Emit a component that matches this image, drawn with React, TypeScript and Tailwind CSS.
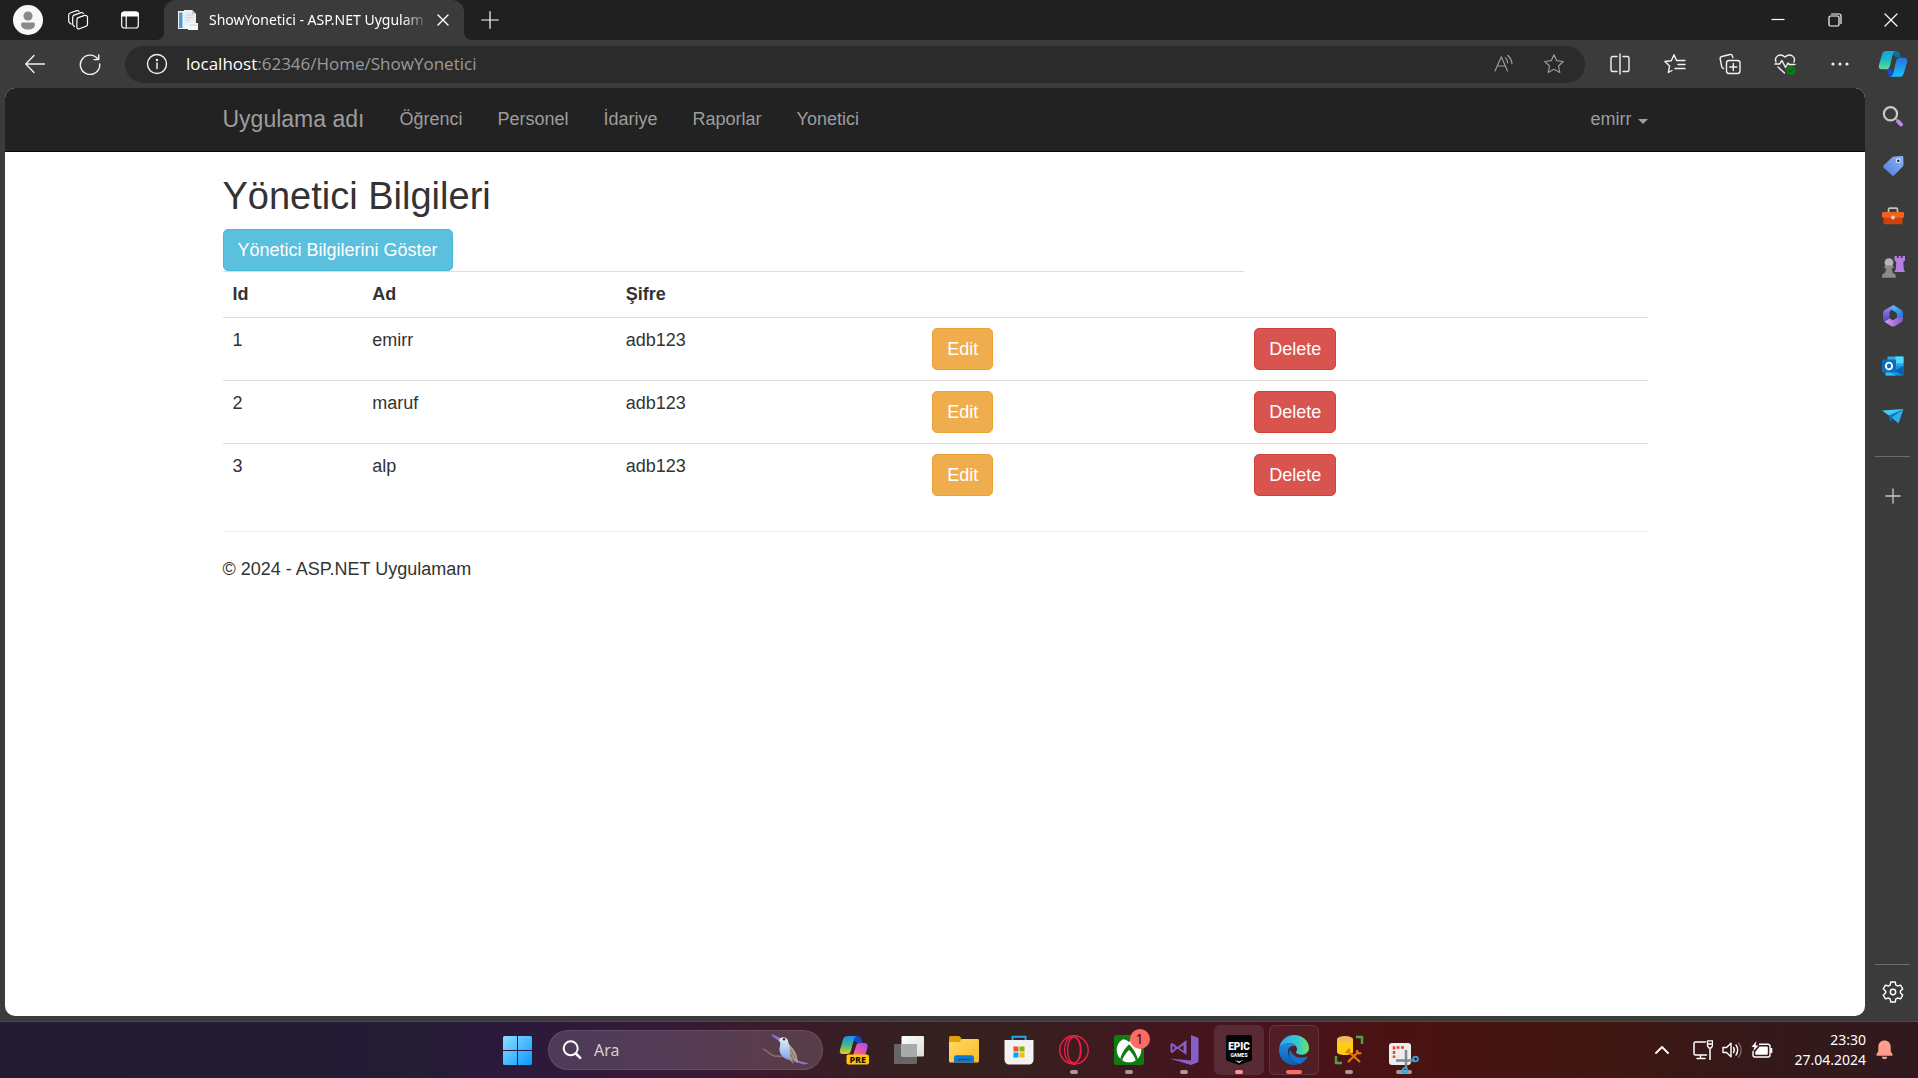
import React from "react";

type Box = { children: React.ReactNode; size?: number; vb?: string; className?: string };

function Svg({ children, size = 20, vb = "0 0 20 20", className }: Box) {
  return (
    <svg
      width={size}
      height={size}
      viewBox={vb}
      fill="none"
      stroke="currentColor"
      strokeWidth={1.2}
      strokeLinecap="round"
      strokeLinejoin="round"
      className={className}
      aria-hidden="true"
    >
      {children}
    </svg>
  );
}

/* ---------- title bar ---------- */

function IconButton({ label, className, children }: { label: string; className: string; children: React.ReactNode }) {
  return (
    <button type="button" aria-label={label} className={`flex shrink-0 items-center justify-center ${className}`}>
      {children}
    </button>
  );
}

function TitleBar() {
  return (
    <div className="flex h-10 shrink-0 items-stretch bg-[#202020] pl-[2px] text-white">
      <IconButton label="Profil" className="w-[52px]">
        <svg width="30" height="30" viewBox="0 0 30 30" aria-hidden="true">
          <circle cx="15" cy="15" r="15" fill="#f8f8f8" />
          <circle cx="15" cy="11" r="4.6" fill="#8a8a8a" />
          <path d="M8 19.2c0-1 .7-1.700 1.700-1.700h10.600c1 0 1.700.7 1.700 1.700 0 3.300-3 5.300-7 5.300s-7-2-7-5.300Z" fill="#8a8a8a" />
        </svg>
      </IconButton>
      <IconButton label="Çalışma alanları" className="w-[47px]">
        <Svg size={22} vb="0 0 22 22">
          <path d="m11.200 8.600 6.600-2.200c1.400-.4 2.700.4 2.700 1.900v7c0 1-.5 1.700-1.400 2l-6.600 2.500c-1.400.5-2.600-.3-2.600-1.800v-7.200c0-1.100.4-1.800 1.300-2.200Z" />
          <path d="m7.600 17.400-1-.6c-.6-.5-.9-1-.9-1.700V8.200c0-1 .5-1.700 1.400-2.100l7-2.500c1-.3 1.800.1 2.200.9" />
          <path d="m4 15-1.400-1.300c-.6-.5-.9-1-.9-1.700V6c0-1 .5-1.700 1.400-2l6.700-2.400c1-.3 1.800.1 2.200.9" />
        </Svg>
      </IconButton>
      <IconButton label="Sekme eylemleri" className="w-[57px]">
        <Svg>
          <rect x="1.700" y="2" width="16.600" height="16" rx="2.500" />
          <path d="M1.700 6V4.500A2.500 2.500 0 0 1 4.200 2h11.600a2.500 2.500 0 0 1 2.500 2.500V6Z" fill="currentColor" />
          <path d="M6.200 6v12" />
        </Svg>
      </IconButton>
      <div className="relative ml-[6px] flex w-[300px] shrink-0 items-center rounded-t-xl bg-[#3b3b3b] pl-[14px] before:absolute before:bottom-0 before:-left-2 before:h-2 before:w-2 before:bg-[radial-gradient(circle_at_0_0,transparent_8px,#3b3b3b_8px)] after:absolute after:-right-2 after:bottom-0 after:h-2 after:w-2 after:bg-[radial-gradient(circle_at_100%_0,transparent_8px,#3b3b3b_8px)]">
        <svg width="20" height="20" viewBox="0 0 20 20" className="shrink-0" aria-hidden="true">
          <path d="M0 1h12v18H0Z" fill="#f2f5f7" />
          <path d="M1 2.500h3.500v15.500H1Z" fill="#4f9dd0" />
          <path d="M6 0h8l4 4v11H6Z" fill="#e9eef2" />
          <path d="M14 0v4h4Z" fill="#c3ccd4" />
          <path d="M7.500 5h8M7.500 7.500h8M7.500 10h5" stroke="#c9d4dc" />
          <path d="M10 13h10v7H10Z" fill="#f7fafc" />
          <path d="M11 15h8" stroke="#c0cad2" />
        </svg>
        <span className="ml-[11px] w-[220px] whitespace-nowrap font-['Noto_Sans','Open_Sans',sans-serif] text-sm [mask-image:linear-gradient(to_right,black_88%,transparent)]">
          ShowYonetici - ASP.NET Uygulam
        </span>
        <button type="button" aria-label="Sekmeyi kapat" className="ml-2">
          <Svg size={12} vb="0 0 12 12">
            <path d="m1 1 10 10M11 1 1 11" strokeWidth="1.400" />
          </Svg>
        </button>
      </div>
      <IconButton label="Yeni sekme" className="w-[52px]">
        <Svg size={18} vb="0 0 18 18">
          <path d="M9 .7v16.600M.7 9h16.600" />
        </Svg>
      </IconButton>
      <div className="flex-1" />
      <IconButton label="Simge durumuna küçült" className="w-[57px]">
        <Svg size={14} vb="0 0 14 14">
          <path d="M.5 6.500h13" strokeLinecap="butt" />
        </Svg>
      </IconButton>
      <IconButton label="Önceki boyut" className="w-[57px]">
        <Svg size={14} vb="0 0 14 14">
          <rect x="1" y="3" width="10" height="10" rx="1.500" />
          <path d="M3.500 1H11a2 2 0 0 1 2 2v7.500" />
        </Svg>
      </IconButton>
      <IconButton label="Kapat" className="w-[55px]">
        <Svg size={14} vb="0 0 14 14">
          <path d="m1 1 12 12m0-12L1 13" />
        </Svg>
      </IconButton>
    </div>
  );
}

/* ---------- address bar ---------- */

function CopilotMark({ size }: { size: number }) {
  return (
    <svg width={size} height={size} viewBox="0 0 32 32" aria-hidden="true">
      <defs>
        <linearGradient id="cpA" x1="0" y1="0" x2="0" y2="1">
          <stop offset="0" stopColor="#0fa5e0" />
          <stop offset=".5" stopColor="#22b7c4" />
          <stop offset="1" stopColor="#5fe08a" />
        </linearGradient>
        <linearGradient id="cpB" x1="0" y1="1" x2="0" y2="0">
          <stop offset="0" stopColor="#12c4f5" />
          <stop offset="1" stopColor="#2a6fe0" />
        </linearGradient>
      </defs>
      <path d="M16 2h4c1.600 0 2.500 1 3 2.500L24.500 9H19l-6-6Z" fill="#0b6f9e" />
      <path d="M8 21h6l2 4 2 4.500h-4c-1.800 0-2.800-1.500-3.300-3.100L9.500 22Z" fill="#1c47d8" />
      <path d="M8.500 2H19c-1.700.3-2.600 1.400-3.200 3.400L12.700 18c-.6 2.400-2 3.700-4.200 3.700H4c-2.700 0-3.700-2-3-4.700L4.200 6C5 3.300 6.300 2 8.500 2Z" fill="url(#cpA)" />
      <path d="M23.500 29.500H13c1.700-.3 2.600-1.400 3.200-3.400L19.300 13c.6-2.400 2-3.700 4.200-3.700H28c2.700 0 3.700 2 3 4.700l-3.200 11c-.8 2.900-2.100 4.500-4.300 4.500Z" fill="url(#cpB)" />
    </svg>
  );
}

function AddressBar() {
  const tool = "h-full w-[55px]";
  return (
    <div className="flex h-12 shrink-0 items-center bg-[#3b3b3b] pl-[7px] text-[#f1f1f1]">
      <IconButton label="Geri" className={tool}>
        <Svg size={20}>
          <path d="M9 1.500.8 10 9 18.500M.8 10h18.700" strokeWidth="1.400" />
        </Svg>
      </IconButton>
      <IconButton label="Yenile" className={tool}>
        <Svg size={22}>
          <path d="M17.300 5.800A8.800 8.800 0 1 0 18.800 10M17.900 1.700V6h-4.300" strokeWidth="1.300" />
        </Svg>
      </IconButton>
      <div className="ml-2 flex h-[37px] flex-1 items-center rounded-full bg-[#2b2b2b] pl-[21px] pr-[6px]">
        <button type="button" aria-label="Site bilgileri">
          <Svg size={22} vb="0 0 22 22">
            <circle cx="11" cy="11" r="9.500" strokeWidth="1.400" />
            <path d="M11 10v5.500" strokeWidth="1.500" />
            <circle cx="11" cy="7" r=".6" fill="currentColor" />
          </Svg>
        </button>
        <div className="relative ml-[18px] h-full flex-1 font-['Open_Sans','Noto_Sans',sans-serif] text-[17px]">
          <input
            aria-label="Adres çubuğu"
            defaultValue="localhost:62346/Home/ShowYonetici"
            className="h-full w-full bg-transparent text-transparent outline-none"
          />
          <span aria-hidden="true" className="pointer-events-none absolute inset-0 flex items-center text-[#9a9a9a]">
            <span className="text-white">localhost</span>:62346/Home/ShowYonetici
          </span>
        </div>
        <IconButton label="Sesli oku" className="h-full w-[50px] text-[#9a9a9a]">
          <Svg size={20}>
            <path d="M1 17 7.300 2.800 13.500 17M3.300 12h8" />
            <path d="M11.300 3.600c1.500 1.400 2.300 3.200 2.400 5.200M13.600 1.300c2.600 2.200 4 5 4.400 8.400" />
          </Svg>
        </IconButton>
        <IconButton label="Sık kullanılanlara ekle" className="h-full w-[50px] text-[#9a9a9a]">
          <Svg size={22} vb="0 0 22 22">
            <path d="m11 1.800 2.800 5.900 6.500.8-4.800 4.500 1.300 6.500L11 16.300l-5.800 3.200L6.500 13 1.700 8.500l6.500-.8Z" />
          </Svg>
        </IconButton>
      </div>
      <div className="ml-[7px] flex h-full shrink-0">
        <IconButton label="Ekranı böl" className={tool}>
          <Svg size={22} vb="0 0 22 22">
            <path d="M8 3.500H4A2 2 0 0 0 2 5.500v11a2 2 0 0 0 2 2h4M14 3.500h4a2 2 0 0 1 2 2v11a2 2 0 0 1-2 2h-4M11 1v20" strokeWidth="1.400" />
          </Svg>
        </IconButton>
        <IconButton label="Sık kullanılanlar" className={tool}>
          <Svg size={22} vb="0 0 22 22">
            <path d="M12.500 7.500 10 1.800 7.300 7.700.9 8.500l4.700 4.600-1.300 6.400 3.700-2M13 7.500h8M14 11.500h7M11 15.500h10" strokeWidth="1.400" />
          </Svg>
        </IconButton>
        <IconButton label="Koleksiyonlar" className={tool}>
          <Svg size={22} vb="0 0 22 22">
            <rect x="7.500" y="7.500" width="13.500" height="13" rx="2.500" strokeWidth="1.400" />
            <path d="M14.300 10.500v7M10.800 14h7" strokeWidth="1.400" />
            <path d="M4.500 15.500c-1-.2-1.600-.8-1.800-1.800L1.200 6C1 4.800 1.600 3.800 2.900 3.500l8-2c1.200-.3 2.200.3 2.500 1.500l.4 1.500" strokeWidth="1.400" />
          </Svg>
        </IconButton>
        <IconButton label="Tarayıcı temelleri" className={tool}>
          <Svg size={22} vb="0 0 22 22">
            <path d="M2 9C-.2 3.500 6-.5 11 4c5-4.500 11.200-.5 9 5M4 14l6.500 6" strokeWidth="1.400" />
            <path d="M1 11h4.500L8 7.500l3.500 7L14 10l1.200 1.500H21" strokeWidth="1.400" />
            <circle cx="17" cy="17.500" r="4.500" fill="#107c10" stroke="none" />
            <path d="m15 17.500 1.400 1.400 2.400-2.600" stroke="#0b4f0b" />
          </Svg>
        </IconButton>
        <IconButton label="Ayarlar ve diğer" className={tool}>
          <svg width="18" height="4" viewBox="0 0 18 4" fill="currentColor" aria-hidden="true">
            <circle cx="2" cy="2" r="1.600" />
            <circle cx="9" cy="2" r="1.600" />
            <circle cx="16" cy="2" r="1.600" />
          </svg>
        </IconButton>
        <IconButton label="Copilot" className="h-full w-[51px]">
          <CopilotMark size={30} />
        </IconButton>
      </div>
    </div>
  );
}

/* ---------- web page ---------- */

const admins = [
  { id: 1, name: "emirr", password: "adb123" },
  { id: 2, name: "maruf", password: "adb123" },
  { id: 3, name: "alp", password: "adb123" },
];

const navLinks = ["Öğrenci", "Personel", "İdariye", "Raporlar", "Yonetici"];

function WebPage() {
  const container = "mx-auto max-w-[1463px] px-[19px]";
  const cell = "border-t border-[#ddd] p-[10px] text-left align-top";
  return (
    <div className="min-w-0 flex-1 overflow-hidden rounded-[10px] bg-white font-['Liberation_Sans',Arial,sans-serif] text-[18px] leading-[25px] text-[#333]">
      <nav className="border-b border-[#080808] bg-[#222] text-[#9d9d9d]">
        <div className={`${container} flex h-[63px] items-center`}>
          <a href="#" className="mr-[35px] text-[23px]">Uygulama adı</a>
          <ul className="flex gap-[35px]">
            {navLinks.map((l) => (
              <li key={l}>
                <a href="#">{l}</a>
              </li>
            ))}
          </ul>
          <button type="button" className="ml-auto flex items-center gap-[6px]">
            emirr
            <span className="mt-1 border-x-[5px] border-t-[5px] border-x-transparent border-t-[#9d9d9d]" />
          </button>
        </div>
      </nav>
      <main className={container}>
        <h2 className="mt-6 mb-3 text-[38px] leading-[41px]">Yönetici Bilgileri</h2>
        <button type="button" className="flex h-[42px] items-center rounded-[5px] border border-[#46b8da] bg-[#5bc0de] px-[14px] text-white">
          Yönetici Bilgilerini Göster
        </button>
        <table className="mb-[25px] w-full table-fixed border-separate border-spacing-0">
          <colgroup>
            <col className="w-[9.8%]" />
            <col className="w-[17.8%]" />
            <col className="w-[21.5%]" />
            <col className="w-[22.6%]" />
            <col />
          </colgroup>
          <thead>
            <tr>
              <th className={cell}>Id</th>
              <th className={cell}>Ad</th>
              <th className={cell}>Şifre</th>
              <th className={cell} />
            </tr>
          </thead>
          <tbody>
            {admins.map((a) => (
              <tr key={a.id}>
                <td className={cell}>{a.id}</td>
                <td className={cell}>{a.name}</td>
                <td className={cell}>{a.password}</td>
                <td className={cell}>
                  <button type="button" className="flex h-[42px] items-center rounded-[5px] border border-[#eea236] bg-[#f0ad4e] px-[14px] text-white">
                    Edit
                  </button>
                </td>
                <td className={cell}>
                  <button type="button" className="flex h-[42px] items-center rounded-[5px] border border-[#d43f3a] bg-[#d9534f] px-[14px] text-white">
                    Delete
                  </button>
                </td>
              </tr>
            ))}
          </tbody>
        </table>
        <hr className="mb-[25px] border-[#eee]" />
        <footer>
          <p>© 2024 - ASP.NET Uygulamam</p>
        </footer>
      </main>
    </div>
  );
}

/* ---------- Edge sidebar ---------- */

function SideBar() {
  const item = "h-[50px] w-full";
  return (
    <aside className="flex w-[53px] shrink-0 flex-col items-center pt-[3px] pl-[2px] text-[#c8c8c8]">
      <IconButton label="Ara" className={item}>
        <svg width="22" height="22" viewBox="0 0 22 22" fill="none" aria-hidden="true">
          <path d="m13.500 13.500 2.500 2.500" stroke="#8a8a8a" strokeWidth="2" />
          <path d="m16.300 16.700 2.700 2.700" stroke="#b98ae8" strokeWidth="4" strokeLinecap="round" />
          <circle cx="8.500" cy="8.800" r="6.600" stroke="#c9c9c9" strokeWidth="2.200" />
        </svg>
      </IconButton>
      <IconButton label="Alışveriş" className={item}>
        <svg width="22" height="22" viewBox="0 0 22 22" aria-hidden="true">
          <defs>
            <linearGradient id="tag" x1="1" y1="0" x2="0" y2="1">
              <stop offset="0" stopColor="#8db4f7" />
              <stop offset="1" stopColor="#4c7fdc" />
            </linearGradient>
          </defs>
          <path d="M12 1.500 20 1c.8 0 1.300.6 1.300 1.300l.2 7.500c0 .7-.2 1.200-.7 1.700l-8.600 8.700c-.7.700-1.500.7-2.200 0l-8.300-7.400c-.7-.7-.8-1.600-.1-2.300l8.800-8.400c.5-.4 1-.6 1.600-.6Z" fill="url(#tag)" />
          <circle cx="16.300" cy="5.800" r="1.900" fill="#1f2b45" stroke="#e8eefc" strokeWidth="1.100" />
        </svg>
      </IconButton>
      <IconButton label="Araçlar" className={item}>
        <svg width="22" height="22" viewBox="0 0 22 22" aria-hidden="true">
          <path d="M6.500 8V4.500c0-.9.600-1.400 1.400-1.400h6.200c.8 0 1.400.5 1.400 1.400V8" fill="none" stroke="#c4c4c4" strokeWidth="1.700" />
          <path d="M1.500 11h19v7c0 .8-.5 1.300-1.300 1.300H2.800c-.8 0-1.300-.5-1.300-1.300Z" fill="#d2400b" />
          <path d="M1.300 7h19.400c.7 0 1.300.5 1.300 1.200v3.300c0 .8-.5 1.200-1.200 1.200H1.200C.5 12.700 0 12.300 0 11.500V8.200C0 7.500.6 7 1.300 7Z" fill="#f2601e" />
          <circle cx="11" cy="12.500" r="2" fill="#d9d2cc" />
        </svg>
      </IconButton>
      <IconButton label="Oyunlar" className={item}>
        <svg width="24" height="24" viewBox="0 0 24 24" aria-hidden="true">
          <path d="M13.500 2h2.400v2h1.700V2h2.200v2h1.600V2H24v4.500l-1.700 1.600.5 7.400 1.200 2.500H13.300l1.400-2.500.6-7.400-1.800-1.600Z" fill="#b77ee0" />
          <circle cx="8" cy="8.600" r="4.400" fill="#b5b5b5" />
          <path d="M3.500 11.500h9v3h-2l1.300 4.500c2 .4 2.900 1.500 2.900 3.200v1.500H1v-1.500C1 20.500 2 19.400 4 19l1.500-4.500h-2Z" fill="#8b8b8b" />
        </svg>
      </IconButton>
      <IconButton label="Microsoft 365" className={item}>
        <svg width="22" height="22" viewBox="0 0 22 22" aria-hidden="true">
          <defs>
            <linearGradient id="mA" x1="0" y1="0" x2="0" y2="1">
              <stop offset="0" stopColor="#a18bf0" />
              <stop offset="1" stopColor="#4b3fc0" />
            </linearGradient>
            <linearGradient id="mB" x1="0" y1="0" x2="1" y2="1">
              <stop offset="0" stopColor="#4fc3f7" />
              <stop offset="1" stopColor="#2a62d8" />
            </linearGradient>
            <linearGradient id="mC" x1="0" y1="0" x2="1" y2="0">
              <stop offset="0" stopColor="#d59cf0" />
              <stop offset="1" stopColor="#8257c6" />
            </linearGradient>
          </defs>
          <path d="M10.500.5 3 4.700C1.700 5.500 1 6.500 1 8v6c0 1.500.7 2.500 1.800 3.200L7.500 14.500V8c0-1.300.4-2.200 1.500-2.800l2.500-1.500Z" fill="url(#mA)" />
          <path d="m10 .8 2-.5 7.200 4.400C20.500 5.500 21 6.500 21 8v6l-6 0V9.500c0-1-.5-1.700-1.300-2.200L10 5Z" fill="url(#mB)" />
          <path d="m2.500 16.800 5-3.300 3.500 1.700 3.800-2.200L21 12v2.200c0 1.300-.6 2.300-1.800 3L13 20.900c-1.200.8-2.700.8-4 0Z" fill="url(#mC)" />
          <path d="m10.500 7.200 3.800 1.800v3.600L11 14.500l-3-1.700V8.600Z" fill="#3b3b3b" />
        </svg>
      </IconButton>
      <IconButton label="Outlook" className={item}>
        <svg width="22" height="22" viewBox="0 0 22 22" aria-hidden="true">
          <path d="M5.500 1.500h15c.5 0 1 .4 1 1V12h-16Z" fill="#28a8ea" />
          <path d="M13.500 1.500h7c.5 0 1 .4 1 1v5.700h-8Z" fill="#50d9ff" />
          <path d="M3.500 11h18v8.500c0 .6-.5 1-1 1h-16c-.5 0-1-.4-1-1Z" fill="#1490df" />
          <path d="m21.500 11-9 5 9 4.500Z" fill="#0a5fb0" />
          <path d="M3.500 14.500 14 20.500H4.500c-.5 0-1-.4-1-1Z" fill="#2cc0f5" />
          <rect x="0" y="4.500" width="14" height="13" rx="1.200" fill="#0f6cbd" />
          <ellipse cx="7" cy="11" rx="3.100" ry="3.400" fill="none" stroke="#fff" strokeWidth="1.900" />
        </svg>
      </IconButton>
      <IconButton label="Drop" className={item}>
        <svg width="22" height="22" viewBox="0 0 22 22" aria-hidden="true">
          <path d="M0 5.500 21.500 4 9 12Z" fill="#45c9f5" />
          <path d="m7 10.500 14.500-6.500L9.500 12.500l-1.200 4.800Z" fill="#1073ba" />
          <path d="M21.500 4 16.500 18.500 9.500 12.500Z" fill="#27b0ee" />
          <path d="m8.300 17.300 1.200-4.800 2.500 2.200Z" fill="#0c5f9e" />
        </svg>
      </IconButton>
      <hr className="mt-[15px] w-[35px] border-[#6b6b6b]" />
      <IconButton label="Özelleştir" className="mt-[14px] h-[50px] w-full">
        <Svg size={16} vb="0 0 16 16">
          <path d="M8 .8v14.400M.8 8h14.400" strokeWidth="1.300" />
        </Svg>
      </IconButton>
      <hr className="mt-auto w-[35px] border-[#6b6b6b]" />
      <IconButton label="Ayarlar" className="mb-[2px] h-[54px] w-full text-white">
        <Svg size={22} vb="0 0 22 22">
          <path
            d="M8.800 1h4.400l.7 3.100 1.600.9 3-.9 2.200 3.800-2.300 2.200v1.800l2.300 2.200-2.200 3.800-3-.9-1.600.9-.7 3.100H8.800l-.7-3.100-1.600-.9-3 .9-2.200-3.800 2.300-2.200v-1.800L1.300 7.900l2.200-3.800 3 .9 1.600-.9Z"
            strokeWidth="1.400"
          />
          <circle cx="11" cy="11" r="2.700" strokeWidth="1.400" />
        </Svg>
      </IconButton>
    </aside>
  );
}

/* ---------- Windows taskbar ---------- */

function TaskButton({
  label,
  mark,
  active,
  children,
}: {
  label: string;
  mark?: string;
  active?: string;
  children: React.ReactNode;
}) {
  return (
    <button type="button" aria-label={label} className="relative flex h-full w-[55px] shrink-0 items-center justify-center">
      <span className={`flex h-[50px] w-[50px] items-center justify-center rounded-md ${active ?? ""}`}>{children}</span>
      {mark && <span className={`absolute bottom-1 h-1 rounded-full ${mark}`} />}
    </button>
  );
}

function Bird() {
  return (
    <svg width="48" height="32" viewBox="0 0 48 32" aria-hidden="true">
      <defs>
        <linearGradient id="bird" x1="0" y1="0" x2="0" y2="1">
          <stop offset="0" stopColor="#e6f2ee" />
          <stop offset=".6" stopColor="#a9c9ee" />
          <stop offset="1" stopColor="#8f9be8" />
        </linearGradient>
      </defs>
      <path d="M1 15c4 1 6 5 10 6.500S17 21 20 23" fill="none" stroke="#8d6a62" strokeWidth="1.700" />
      <path d="m20 22 9 2.500 18 5-5 1-17-5Z" fill="#8a72cf" />
      <path d="m10 1 9 4-1 2Z" fill="#8d6fd0" stroke="#8d6fd0" strokeWidth="1.500" />
      <path d="M17 6c1-3 6-4 8.500-.5C26.500 7 26 9 27.500 11c4 4 6 7 6.500 13l-5 1.500c-6 0-10.500-3-11.500-9-.4-3 1-5 .8-7.500Z" fill="url(#bird)" />
      <path d="M27.500 12c5 3 8 8 8.500 17l-7-4 3 5c-4-3-5-6-4-9Z" fill="#b19a80" />
      <path d="m28.500 16 5 8m-5-4 4 8" stroke="#6e6a80" />
      <circle cx="22" cy="5.300" r="1.200" fill="#2c2c60" />
    </svg>
  );
}

function TaskBar() {
  const dot = "w-2 bg-[#a89a9b]";
  return (
    <footer className="grid h-[57px] shrink-0 grid-cols-[1fr_auto_1fr] items-center border-t border-[#50454a] bg-[linear-gradient(90deg,#231c30_0%,#251c35_22%,#2b193b_26%,#35193a_34%,#3d1a2d_40%,#34211f_48%,#37201f_53%,#42171f_60%,#48121d_66%,#4a1312_73%,#401611_83%,#35191a_92%,#2f191e_100%)] pl-[3px] font-['Noto_Sans','Open_Sans',sans-serif] text-white">
      <div />
      <div className="flex h-full items-center">
        <TaskButton label="Başlat">
          <svg width="29" height="29" viewBox="0 0 29 29" aria-hidden="true">
            <defs>
              <linearGradient id="win" gradientUnits="userSpaceOnUse" x1="0" y1="0" x2="29" y2="29">
                <stop offset="0" stopColor="#8be2ff" />
                <stop offset="1" stopColor="#0a95ff" />
              </linearGradient>
            </defs>
            <path d="M1.500 0H14v14H0V1.500A1.500 1.500 0 0 1 1.500 0ZM15 0h12.500A1.500 1.500 0 0 1 29 1.500V14H15ZM0 15h14v14H1.500A1.500 1.500 0 0 1 0 27.500ZM15 15h14v12.500a1.500 1.500 0 0 1-1.500 1.500H15Z" fill="url(#win)" />
          </svg>
        </TaskButton>
        <label className="mr-[3px] ml-[3px] flex h-10 w-[275px] items-center rounded-full border border-white/10 bg-white/15 pr-3 pl-[13px]">
          <Svg size={20}>
            <circle cx="8.700" cy="8.300" r="7" strokeWidth="2" />
            <path d="m13.800 13.500 4.400 4.400" strokeWidth="2.500" />
          </Svg>
          <input aria-label="Ara" placeholder="Ara" className="ml-3 min-w-0 flex-1 bg-transparent text-base outline-none placeholder:text-[#d8ccd4]" />
          <Bird />
        </label>
        <TaskButton label="Copilot">
          <svg width="30" height="30" viewBox="0 0 30 30" aria-hidden="true">
            <defs>
              <linearGradient id="cA" x1="0" y1="0" x2="0" y2="1">
                <stop offset="0" stopColor="#1b8df0" />
                <stop offset=".5" stopColor="#3cb98a" />
                <stop offset="1" stopColor="#f5c518" />
              </linearGradient>
              <linearGradient id="cB" x1="1" y1="0" x2="0" y2="1">
                <stop offset="0" stopColor="#9a4ff0" />
                <stop offset=".6" stopColor="#e858a8" />
                <stop offset="1" stopColor="#ff8a5c" />
              </linearGradient>
            </defs>
            <path d="M12 1h6.500c2 0 3 1 3.500 2.500L23.500 8H18l-5-4Z" fill="#1746c8" />
            <path d="M9 1h9c-2 .5-2.600 1.500-3 3.300L12 15.500c-.6 2.400-1.800 3.500-4 3.500H3.700C1 19 .3 17.200 1 14.800L4 4.500C4.800 2 6.500 1 9 1Z" fill="url(#cA)" />
            <path d="M20.500 8H25c3 0 4.300 1.800 3.500 4.500L26 21H14l3-10c.6-2 1.500-3 3.500-3Z" fill="url(#cB)" />
            <rect x="7.500" y="19.500" width="22.500" height="10" rx="2" fill="#ffc60a" />
            <text x="18.700" y="27.700" textAnchor="middle" fontSize="9" fontWeight="800" fill="#1a1400">PRE</text>
          </svg>
        </TaskButton>
        <TaskButton label="Görev görünümü">
          <svg width="30" height="28" viewBox="0 0 30 28" aria-hidden="true">
            <defs>
              <linearGradient id="tv" x1="0" y1="0" x2="1" y2="1">
                <stop offset="0" stopColor="#fff" />
                <stop offset="1" stopColor="#dcdcdc" />
              </linearGradient>
            </defs>
            <rect x="0" y="8" width="23" height="20" rx="1" fill="#666" />
            <rect x="7.500" y="0" width="22.500" height="20.500" rx="1" fill="url(#tv)" />
            <path d="M7.500 8H23v12.500H7.500Z" fill="#aaa" />
          </svg>
        </TaskButton>
        <TaskButton label="Dosya Gezgini">
          <svg width="32" height="28" viewBox="0 0 32 28" aria-hidden="true">
            <defs>
              <linearGradient id="fold" x1="0" y1="0" x2="1" y2="1">
                <stop offset="0" stopColor="#ffdb66" />
                <stop offset="1" stopColor="#fcb82a" />
              </linearGradient>
            </defs>
            <path d="M1 1.500C1 .7 1.600 0 2.500 0h8c.5 0 1 .2 1.300.5L14 3.500 11 9H1Z" fill="#e8a008" />
            <path d="M1 6h10.500L14 3h15.500c.9 0 1.500.7 1.500 1.500V25c0 .9-.6 1.500-1.500 1.500h-27C1.600 26.500 1 25.900 1 25Z" fill="url(#fold)" />
            <path d="M6 26.500V22c0-1.700 1-2.700 2.700-2.700h14.600c1.700 0 2.700 1 2.700 2.700v4.500Z" fill="#0f78d0" />
            <path d="M10 23.500h12" stroke="#0a4f93" strokeWidth="1.300" />
          </svg>
        </TaskButton>
        <TaskButton label="Microsoft Store">
          <svg width="30" height="30" viewBox="0 0 30 30" aria-hidden="true">
            <path d="M8.500 5V1.700h13V5" fill="none" stroke="#1fa8ea" strokeWidth="1.900" />
            <path d="M.5 5h29v19.500c0 3-2 5-5 5h-19c-3 0-5-2-5-5Z" fill="#f2f2f2" />
            <path d="M9.500 11.500h5v5h-5Z" fill="#f25022" />
            <path d="M15.500 11.500h5v5h-5Z" fill="#7fba00" />
            <path d="M9.500 17.500h5v5h-5Z" fill="#00a4ef" />
            <path d="M15.500 17.500h5v5h-5Z" fill="#ffb900" />
          </svg>
        </TaskButton>
        <TaskButton label="Opera" mark={dot}>
          <svg width="30" height="30" viewBox="0 0 30 30" fill="none" stroke="#ee1f48" aria-hidden="true">
            <circle cx="15" cy="15" r="14.200" strokeWidth="1.400" />
            <ellipse cx="15" cy="15" rx="6.500" ry="13" strokeWidth="1.400" />
            <path d="M15.500 2C24.500 4.500 24.500 25.500 15.500 28" strokeWidth="1.200" />
            <path d="M13 1.500C3 4 3 26 13 28.500" strokeWidth="1.200" />
          </svg>
        </TaskButton>
        <TaskButton label="Xbox" mark={dot}>
          <span className="relative">
            <svg width="30" height="30" viewBox="0 0 30 30" aria-hidden="true">
              <rect width="30" height="30" rx="2.500" fill="#107c10" />
              <circle cx="15" cy="15" r="12.300" fill="#fff" />
              <path d="M8 4.500c2-.6 4.500.6 7 2.500 2.500-1.900 5-3.100 7-2.500L19 2.500 15 1.800 11 2.500Z" fill="#107c10" />
              <path d="M15 9.500c2 1.500 7.500 8 8.700 14.400l-1.900 1.600C20.500 21 17 16.800 15 15c-2 1.800-5.500 6-6.800 10.500l-1.900-1.600C7.500 17.500 13 11 15 9.500Z" fill="#107c10" />
            </svg>
            <span className="absolute -top-[6px] -right-[6px] flex h-5 w-5 items-center justify-center rounded-full bg-[#ff6b64] text-sm text-[#2a1010]">1</span>
          </span>
        </TaskButton>
        <TaskButton label="Visual Studio" mark={dot}>
          <svg width="30" height="30" viewBox="0 0 30 30" fill="#8660c8" aria-hidden="true">
            <path d="m22 0 7.500 3v24L22 30 .5 23.500 22 25.500Z" />
            <path d="M17.500 5v15L8.500 13.500 3.500 18 1.500 17V9l2-1 5 4Zm-3 5-4 3 4 3.200ZM3.500 10.500v5L6.200 13Z" fillRule="evenodd" />
          </svg>
        </TaskButton>
        <TaskButton label="Epic Games" mark="w-2 bg-[#ff949b]" active="bg-white/10">
          <svg width="26" height="30" viewBox="0 0 26 30" aria-hidden="true">
            <path d="M2 0h22c1.300 0 2 .7 2 2v22c0 1-.5 1.600-1.500 2L13 30 1.500 26C.5 25.600 0 25 0 24V2C0 .7.700 0 2 0Z" fill="#050505" />
            <text x="13" y="14.500" textAnchor="middle" fontFamily="Roboto" fontSize="10" fontWeight="900" fill="#fff">EPIC</text>
            <text x="13" y="21.500" textAnchor="middle" fontFamily="Roboto" fontSize="5" fontWeight="800" fill="#fff">GAMES</text>
            <path d="m9 25 4 1.500 4-1.500-4 3Z" fill="#fff" />
          </svg>
        </TaskButton>
        <TaskButton label="Microsoft Edge" mark="w-4 bg-[#ff6b64]" active="border border-white/10 bg-white/5">
          <svg width="30" height="30" viewBox="0 0 30 30" aria-hidden="true">
            <defs>
              <linearGradient id="eA" x1="0" y1="0" x2="1" y2="0">
                <stop offset="0" stopColor="#2da7e6" />
                <stop offset=".6" stopColor="#35c6d0" />
                <stop offset="1" stopColor="#6be36a" />
              </linearGradient>
              <linearGradient id="eB" x1="0" y1="0" x2="0" y2="1">
                <stop offset="0" stopColor="#1a8fe0" />
                <stop offset="1" stopColor="#0b5cb8" />
              </linearGradient>
            </defs>
            <path d="M.3 12.500C1.500 5.500 7.500 0 15 0c8.500 0 15 6 15 12.800 0 4.300-3.300 7-7.300 7-3.700 0-5.700-1.300-5.700-2.500 0-.9 1-1.400 1-3.300 0-3-3-5.800-7.500-5.800-4.300 0-7.500 1.600-10.200 4.300Z" fill="url(#eA)" />
            <path d="M0 15C0 10.500 4.500 8.200 9.500 8.200c4 0 6.500 1.300 7.800 3.300-5.500-1.500-8.300 1.500-8.300 5C9 22 13.500 28 19.500 29.300c-1.400.5-2.900.7-4.500.7C6.500 30 0 23.500 0 15Z" fill="url(#eB)" />
            <path d="M11.500 14C8 20 12 28 20.500 28.900c3-1 6-3.400 7.700-6.500.3-.6-.2-1-.8-.7-1.400.6-3 .9-4.900.9-6.500 0-10.500-4-11-8.600Z" fill="#1673cc" />
          </svg>
        </TaskButton>
        <TaskButton label="SQL Server Management Studio" mark={dot}>
          <svg width="30" height="30" viewBox="0 0 30 30" aria-hidden="true">
            <path d="M22 2h6v7M8 28H2v-7" fill="none" stroke="#4da34d" strokeWidth="2.400" />
            <path d="M3 4v13c0 1.700 3.600 3 8 3s8-1.300 8-3V4Z" fill="#fccd12" />
            <ellipse cx="11" cy="4" rx="8" ry="3" fill="#f3b765" />
            <path d="m14 27 9-9m-8-1 11 10M12 18l4-4m7 1c0 3 2 4 4.500 3" fill="none" stroke="#e8730c" strokeWidth="2.300" />
          </svg>
        </TaskButton>
        <TaskButton label="Ekran Alıntısı Aracı" mark="w-4 bg-[#a89a9b]">
          <svg width="32" height="32" viewBox="0 0 32 32" className="relative top-2 z-10" aria-hidden="true">
            <rect x="1" y="1" width="22" height="22" rx="3" fill="#ededed" />
            <path d="M16 5.500H6V16" fill="none" stroke="#df4b28" strokeWidth="2.500" strokeDasharray="3 1.500" />
            <path d="M18 8v18M8 18.500h19" stroke="#7e8790" strokeWidth="2.500" />
            <circle cx="27.500" cy="17" r="2.400" fill="none" stroke="#2aa4e4" strokeWidth="1.800" />
            <circle cx="17" cy="28.500" r="2.400" fill="none" stroke="#2aa4e4" strokeWidth="1.800" />
          </svg>
        </TaskButton>
      </div>
      <div className="flex h-full items-center justify-end pr-[25px]">
        <button type="button" aria-label="Gizli simgeler" className="mr-6">
          <Svg size={14} vb="0 0 14 14">
            <path d="m1 10 6-6 6 6" strokeWidth="1.800" />
          </Svg>
        </button>
        <button type="button" aria-label="Hızlı ayarlar" className="mr-[21px] flex items-center gap-[9px]">
          <Svg size={20}>
            <path d="M12.500 2H2.500A1.500 1.500 0 0 0 1 3.500v10A1.500 1.500 0 0 0 2.500 15h11M7.500 15v3.500m-3.500 0h8M17 9v10.500" strokeWidth="1.500" />
            <path d="M14.500.8h5V6l-1.500 2h-2L14.500 6Zm0 3.200h5" strokeWidth="1.300" />
          </Svg>
          <Svg size={20}>
            <path d="M1 7.500h3.500L9 3.300v13.400L4.500 12.500H1Z" strokeWidth="1.400" />
            <path d="M11.500 7.500c1 1.400 1 3.600 0 5M14 5c2.200 2.800 2.200 7.200 0 10" strokeWidth="1.400" />
            <path d="M16.500 3c3.500 4 3.500 10 0 14" strokeWidth="1.400" opacity=".35" />
          </Svg>
          <svg width="22" height="18" viewBox="0 0 22 18" fill="none" stroke="currentColor" strokeWidth="1.400" aria-hidden="true">
            <path d="M8 3.200h9a2 2 0 0 1 2 2V14a2 2 0 0 1-2 2H4a2 2 0 0 1-2-2v-4" />
            <path d="M8.500 5.500h7.300c.6 0 1 .4 1 1v6.200c0 .6-.4 1-1 1H5.200c-.6 0-1-.4-1-1V11Z" fill="currentColor" stroke="none" />
            <path d="M20.300 7v5" strokeWidth="2" />
            <path d="M5.500 0 .5 6h3l-1.500 4.500L7.500 4.500h-3Z" fill="currentColor" stroke="none" />
          </svg>
        </button>
        <button type="button" className="mr-[10px] text-right text-sm leading-5">
          <span className="block">23:30</span>
          <span className="block">27.04.2024</span>
        </button>
        <button type="button" aria-label="Bildirimler">
          <svg width="17" height="20" viewBox="0 0 17 20" fill="#ff9d8c" aria-hidden="true">
            <path d="M8.500.5c3.700 0 6.200 2.700 6.200 6.200v4.500l1.900 3.300c.3.600 0 1.200-.7 1.200H1.100c-.7 0-1-.6-.7-1.200l1.900-3.300V6.700C2.300 3.200 4.800.5 8.500.5Z" />
            <path d="M5.700 16.800h5.600c-.4 1.700-1.300 2.500-2.800 2.500s-2.400-.8-2.800-2.500Z" />
          </svg>
        </button>
      </div>
    </footer>
  );
}

export default function App() {
  return (
    <div className="flex h-screen flex-col bg-[#3b3b3b]">
      <TitleBar />
      <AddressBar />
      <div className="flex min-h-0 flex-1 pl-[5px]">
        <div className="flex min-w-0 flex-1 pb-[5px]">
          <WebPage />
        </div>
        <SideBar />
      </div>
      <TaskBar />
    </div>
  );
}
